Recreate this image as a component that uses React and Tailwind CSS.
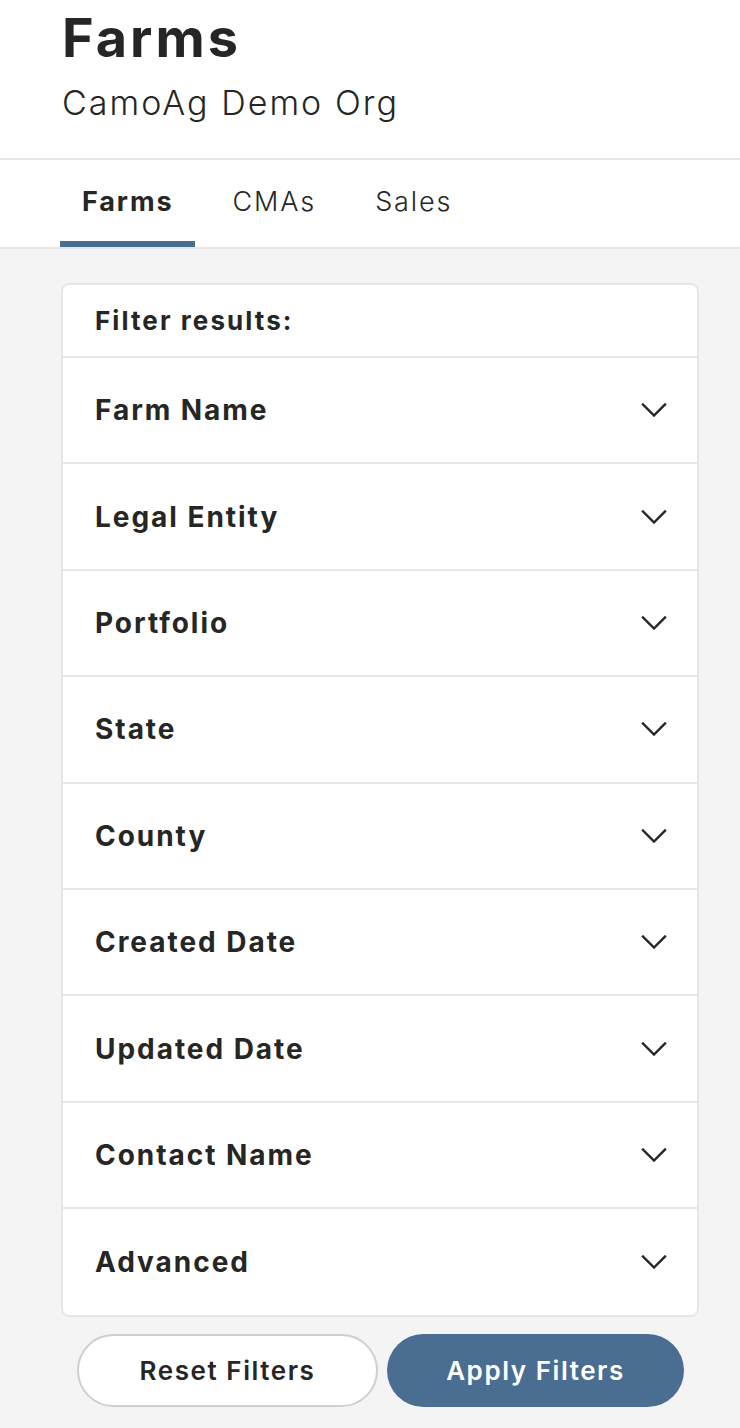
import React from 'react';

const FONT = "font-['Inter','Liberation_Sans',sans-serif]";

const FILTERS = [
  'Farm Name',
  'Legal Entity',
  'Portfolio',
  'State',
  'County',
  'Created Date',
  'Updated Date',
  'Contact Name',
  'Advanced',
];

const TABS = ['Farms', 'CMAs', 'Sales'];

const Chevron = () => (
  <svg className="w-[26px] h-[14px] text-[#262624]" fill="none" stroke="currentColor" viewBox="0 0 26 14">
    <path strokeLinecap="square" strokeWidth={2.4} d="M2 1.5l11 11 11-11" />
  </svg>
);

const App = () => {
  return (
    <div className={`min-h-[1428px] bg-[#f4f4f4] text-[#262624] ${FONT}`}>
      {/* Page header */}
      <header className="bg-white px-[62px] pt-[11px] pb-[38px] border-b-2 border-[#e6e6e6]">
        <h1 className="text-[54px] leading-none font-bold tracking-[0.055em]">Farms</h1>
        <p className="mt-[21px] text-[34px] leading-none font-light tracking-[0.06em]">CamoAg Demo Org</p>
      </header>

      {/* Tabs */}
      <nav className="bg-white px-[60px] flex gap-[15px] border-b-2 border-[#e6e6e6]">
        {TABS.map((tab, i) => (
          <div
            key={tab}
            className={
              'px-[22px] pt-[29px] pb-[26px] text-[27px] leading-[26px] tracking-[0.07em] border-b-[6px] ' +
              (i === 0 ? 'font-bold border-[#4a6e91]' : 'font-light border-transparent')
            }
          >
            {tab}
          </div>
        ))}
      </nav>

      <main className="pl-[61px] pr-[41px] pt-[34px]">
        {/* Filter card */}
        <div className="bg-white border-2 border-[#e6e6e6] rounded-[8px]">
          <div className="h-[73px] px-[32px] flex items-center text-[26px] font-bold tracking-[0.08em] border-b-2 border-[#e6e6e6]">
            Filter results:
          </div>
          {FILTERS.map((label, i) => (
            <div
              key={label}
              className={
                'pl-[32px] pr-[30px] flex items-center justify-between ' +
                (i < FILTERS.length - 1 ? 'h-[106.4px] border-b-2 border-[#e6e6e6]' : 'h-[106px]')
              }
            >
              <span className="text-[28px] font-bold tracking-[0.07em]">{label}</span>
              <Chevron />
            </div>
          ))}
        </div>

        {/* Actions */}
        <div className="mt-[17px] pl-[16px] pr-[15px] flex gap-[9px]">
          <button className="flex-1 h-[73px] rounded-full bg-white border-2 border-[#cfcfcf] text-[26px] font-semibold tracking-[0.06em]">
            Reset Filters
          </button>
          <button className="flex-1 h-[73px] rounded-full bg-[#4a6e91] text-white text-[26px] font-semibold tracking-[0.06em]">
            Apply Filters
          </button>
        </div>
      </main>
    </div>
  );
};

export default App;
